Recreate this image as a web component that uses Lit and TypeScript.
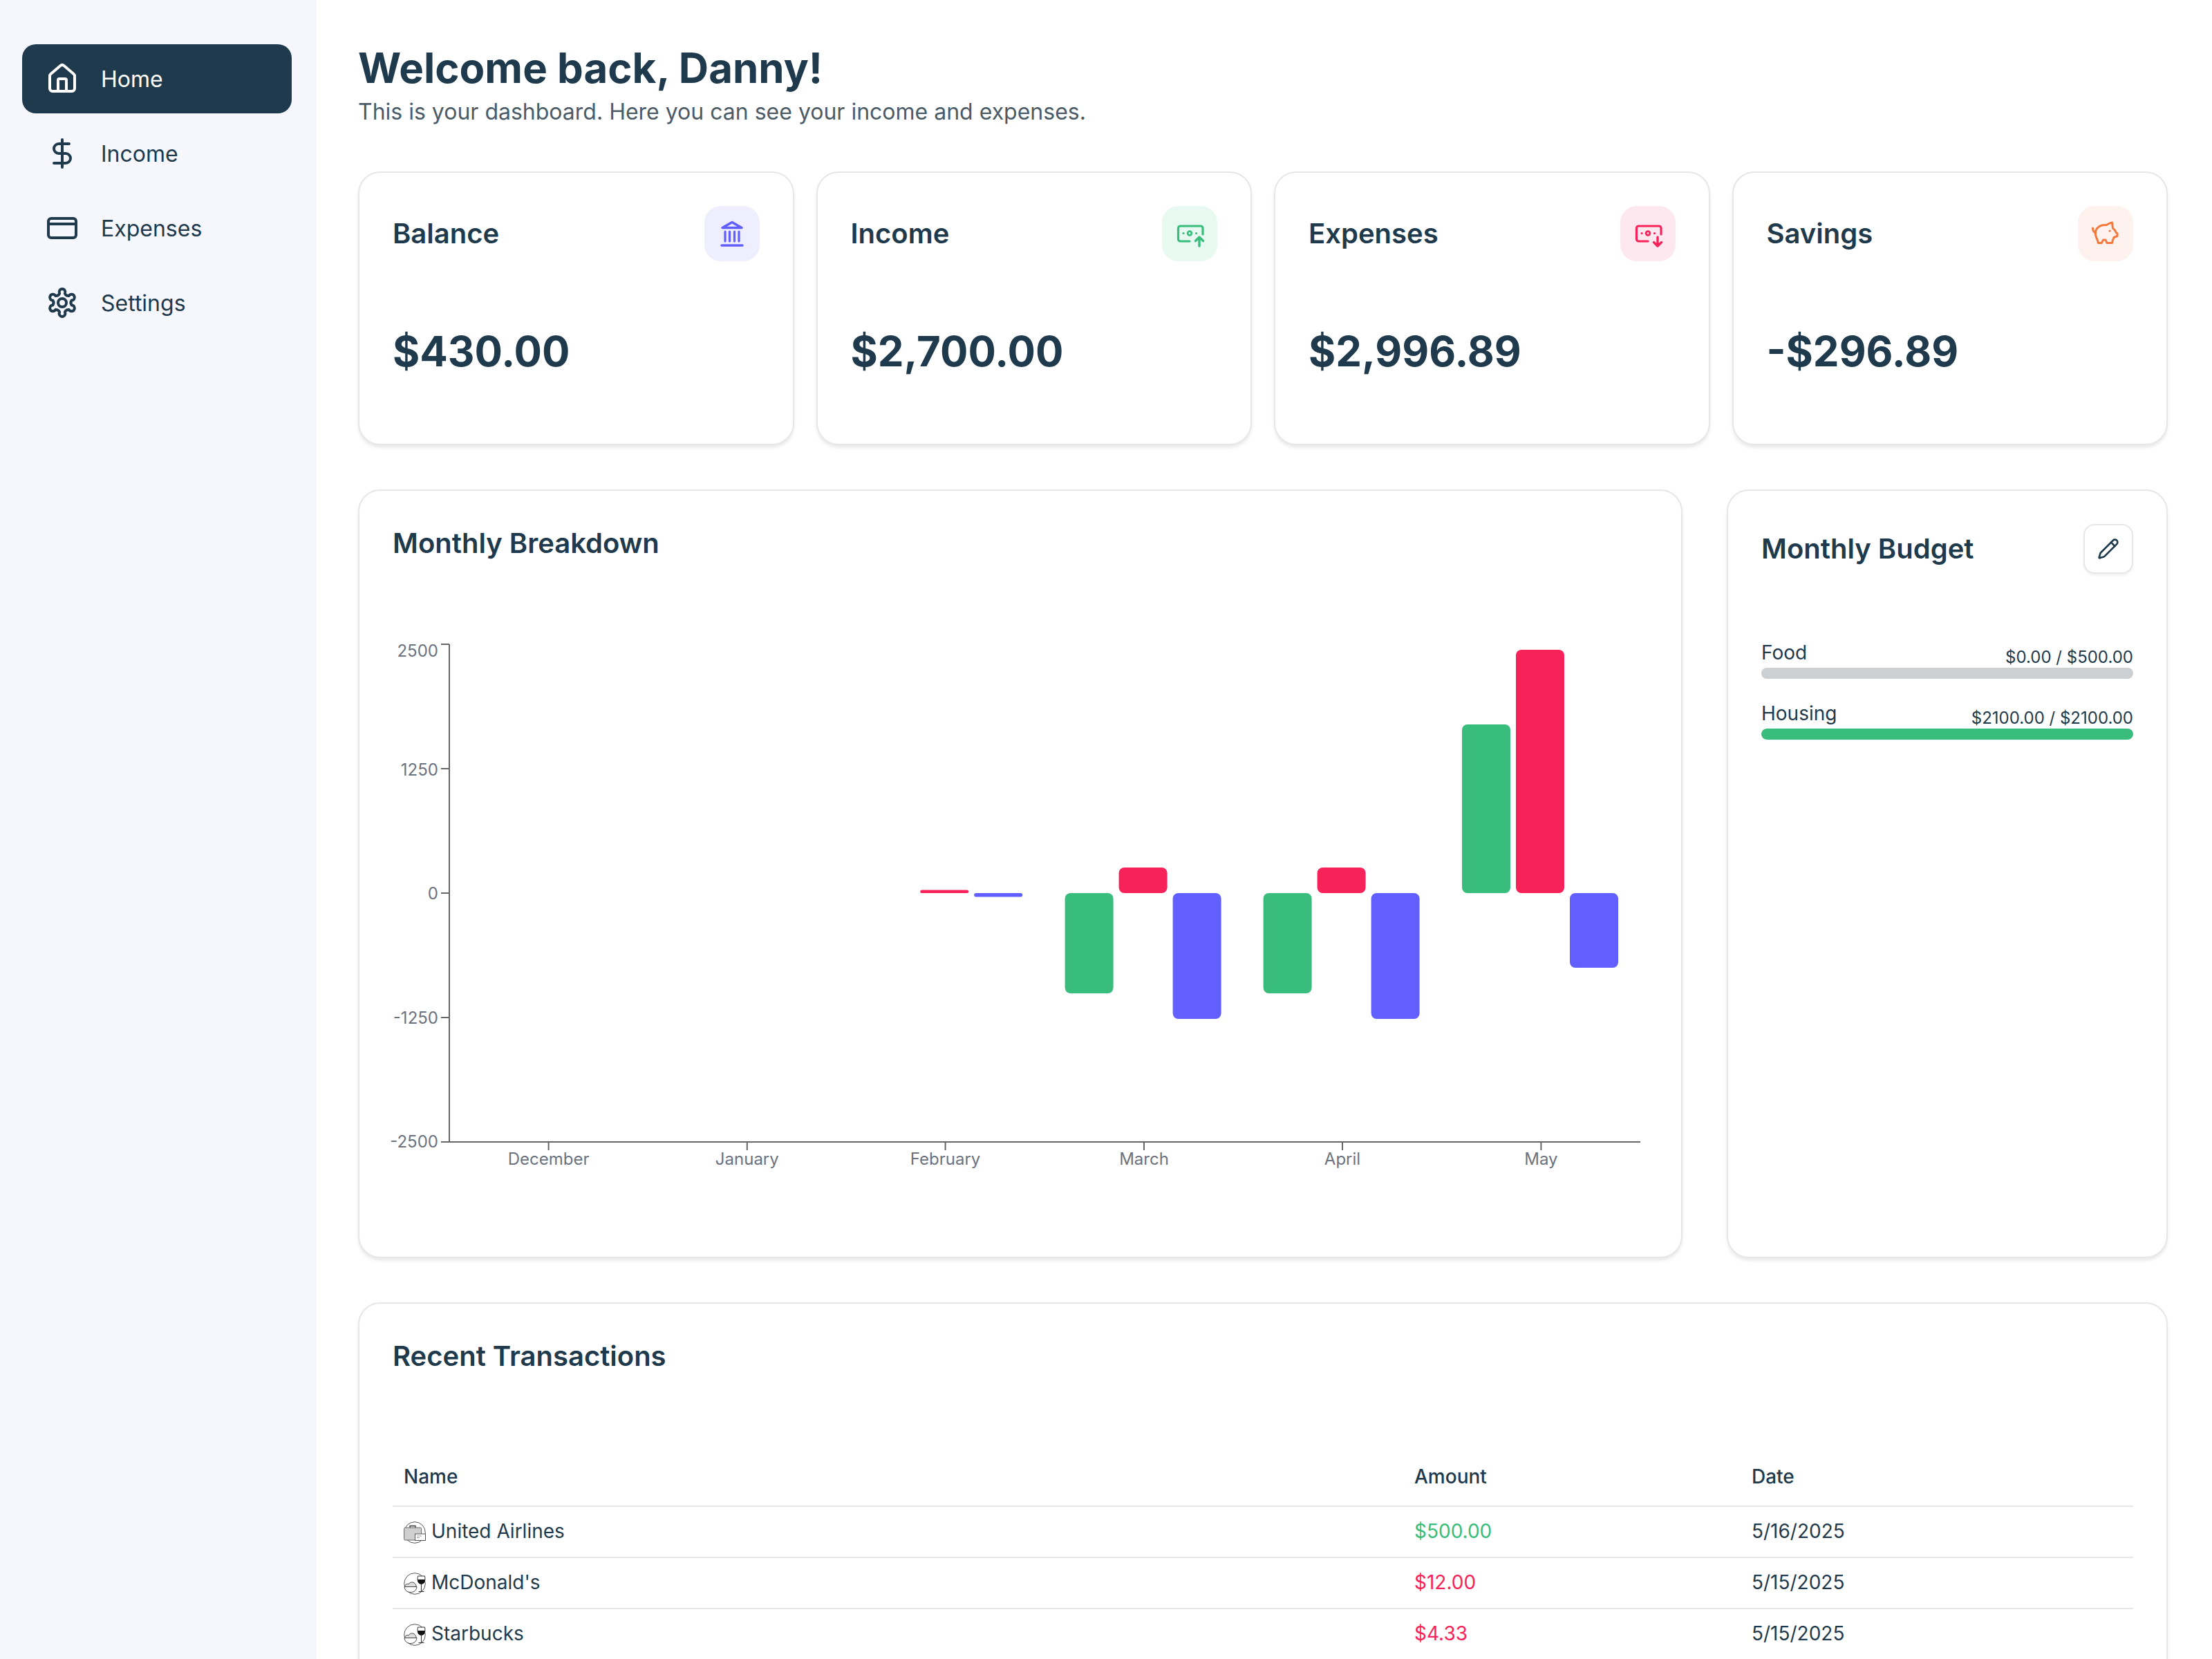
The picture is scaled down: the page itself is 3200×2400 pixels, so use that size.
import { LitElement, html, css, svg } from "lit";
import { customElement } from "lit/decorators.js";

const ic = (body: unknown, size = 48) => html`<svg width=${size} height=${size} viewBox="0 0 24 24" fill="none" stroke="currentColor" stroke-width="2" stroke-linecap="round" stroke-linejoin="round">${body}</svg>`;

function gearPath() {
  const p = (r: number, deg: number) => {
    const a = ((deg - 90) * Math.PI) / 180;
    return `${(12 + r * Math.cos(a)).toFixed(2)} ${(12 + r * Math.sin(a)).toFixed(2)}`;
  };
  let d = `M${p(7, -16)}`;
  for (let k = 0; k < 6; k++) {
    const t = k * 60;
    d += ` A2.2 2.2 0 1 1 ${p(7, t + 16)} A3 3 0 0 0 ${p(7, t + 44)}`;
  }
  return d + "Z";
}

const navIcons = {
  home: ic(svg`<path d="M15 21v-8a1 1 0 0 0-1-1h-4a1 1 0 0 0-1 1v8"/><path d="M3 10a2 2 0 0 1 .709-1.528l7-5.999a2 2 0 0 1 2.582 0l7 5.999A2 2 0 0 1 21 10v9a2 2 0 0 1-2 2H5a2 2 0 0 1-2-2z"/>`),
  dollar: ic(svg`<line x1="12" x2="12" y1="2" y2="22"/><path d="M17 5H9.5a3.5 3.5 0 0 0 0 7h5a3.5 3.5 0 0 1 0 7H6"/>`),
  card: ic(svg`<rect x="2" y="5" width="20" height="14" rx="2"/><line x1="2" x2="22" y1="9" y2="9"/>`),
  gear: ic(svg`<path d=${gearPath()}/><circle cx="12" cy="12" r="3"/>`),
};

const box = (body: unknown) => html`<svg width="80" height="80" viewBox="0 0 80 80" fill="none" stroke="currentColor" stroke-linecap="round" stroke-linejoin="round">${body}</svg>`;

const bank = box(svg`<path d="M40 23.500 L26 31.500 H54 Z" stroke-width="3.500"/><path d="M30 37V51M36.500 37V51M43.500 37V51M50 37V51" stroke-width="3.200"/><path d="M25 57H55" stroke-width="3.500"/>`);
const money = (arrow: unknown) => box(svg`<path d="M40 51H26.500a3 3 0 0 1-3-3V32a3 3 0 0 1 3-3H56a3 3 0 0 1 3 3v9" stroke-width="3.200"/><circle cx="40" cy="39.500" r="2.800" stroke-width="2.800"/><path d="M31 39.500h.1M49.500 39.500h.1" stroke-width="3.200"/>${arrow}`);
const moneyUp = money(svg`<path d="M54 58V45M48.500 50.500 54 45l5.500 5.500" stroke-width="3.400"/>`);
const moneyDown = money(svg`<path d="M54 45V58M48.500 52.500 54 58l5.500-5.500" stroke-width="3.400"/>`);
const pig = box(svg`<path d="M28 32C31 28.500 36 27 41.500 27.500C44 26 47 24 49.500 24L50.500 32C53 34 54.500 36 55.500 38.700L57 39.500V43.500L52 45.500C51 48 50 50 49.500 53.500H42L40 49H36.500L34.500 53.500H29.500C28.500 49 26.500 46 25.500 42C24.500 38 25.500 35 28 32Z" stroke-width="3"/><path d="M21.500 32C21.500 35 23 38 25.700 38.700" stroke-width="3"/><path d="M46 36h.1" stroke-width="3.200"/>`);

const pencil = html`<svg width="32" height="32" viewBox="0 0 24 24" fill="none" stroke="currentColor" stroke-width="2" stroke-linecap="round" stroke-linejoin="round"><path d="M21.174 6.812a1 1 0 0 0-3.986-3.987L3.842 16.174a2 2 0 0 0-.5.83l-1.321 4.352a.5.5 0 0 0 .623.622l4.353-1.32a2 2 0 0 0 .83-.497z"/><path d="m15 5 4 4"/></svg>`;

const travel = html`<svg class="cat" width="32" height="32" viewBox="0 0 32 32" fill="none"><circle cx="16" cy="16" r="15.300" stroke="#555" stroke-width="1"/><path d="M9 9V6.500h8V9" stroke="#333" stroke-width="1.300"/><rect x="0.600" y="9" width="25" height="18" rx="1.500" fill="#cfcfcf" stroke="#666" stroke-width="1"/><rect x="16.500" y="18" width="15" height="9.500" fill="#fff" stroke="#555" stroke-width="1"/><path d="M19 21h7M19 23.500h4" stroke="#999" stroke-width="1"/></svg>`;
const food = html`<svg class="cat" width="32" height="32" viewBox="0 0 32 32" fill="none"><circle cx="16" cy="16" r="15.300" stroke="#555" stroke-width="1"/><path d="M1 20.500h18c-.5 5-4 8-9 8s-8.500-3-9-8Z" fill="#fff" stroke="#444" stroke-width="1"/><path d="M1.500 20c.5-3 3-4 6-3.500 1.500-3 6-3.500 8.500-1 1.500 1.500 2 3 2 4.500" fill="#ddd" stroke="#444" stroke-width="1"/><path d="M20.500 5h10c1 5 .5 11-5 11.500-5.500-.5-6-6.500-5-11.500Z" fill="#fff" stroke="#333" stroke-width="1"/><path d="M20.300 10h10.400c.4 3-1 6.500-5.200 6.500-4.200 0-5.600-3.500-5.200-6.500Z" fill="#111"/><path d="M25.500 16.500V27M21.500 27.500h8" stroke="#333" stroke-width="1"/></svg>`;

interface Bar { x: number; w: number; top: number; bottom: number; c: string }
const GREEN = "#38bd7c", RED = "#f8225b", BLUE = "#615fff";
const centers = [793.6, 1080.8, 1367.6, 1655, 1942, 2229.4];
const off = [-114.4, -36.4, 41.6];
const bars: Bar[] = [
  { x: centers[2] + off[1], w: 70, top: 1287.5, bottom: 1292, c: RED },
  { x: centers[2] + off[2], w: 70, top: 1292, bottom: 1297.5, c: BLUE },
  { x: centers[3] + off[0], w: 70, top: 1292, bottom: 1437, c: GREEN },
  { x: centers[3] + off[1], w: 70, top: 1255, bottom: 1292, c: RED },
  { x: centers[3] + off[2], w: 70, top: 1292, bottom: 1474, c: BLUE },
  { x: centers[4] + off[0], w: 70, top: 1292, bottom: 1437, c: GREEN },
  { x: centers[4] + off[1], w: 70, top: 1255, bottom: 1292, c: RED },
  { x: centers[4] + off[2], w: 70, top: 1292, bottom: 1474, c: BLUE },
  { x: centers[5] + off[0], w: 70, top: 1048, bottom: 1292, c: GREEN },
  { x: centers[5] + off[1], w: 70, top: 940, bottom: 1292, c: RED },
  { x: centers[5] + off[2], w: 70, top: 1292, bottom: 1400, c: BLUE },
];
const months = ["December", "January", "February", "March", "April", "May"];
const yTicks: [string, number, number][] = [["2500", 932, 941], ["1250", 1112, 1113], ["0", 1292, 1292], ["-1250", 1472, 1472], ["-2500", 1652, 1651]];

const stats = [
  { t: "Balance", v: "$430.00", i: bank, k: "blue" },
  { t: "Income", v: "$2,700.00", i: moneyUp, k: "green" },
  { t: "Expenses", v: "$2,996.89", i: moneyDown, k: "red" },
  { t: "Savings", v: "-$296.89", i: pig, k: "orange" },
];
const tx = [
  { n: "United Airlines", a: "$500.00", d: "5/16/2025", i: travel, pos: true },
  { n: "McDonald's", a: "$12.00", d: "5/15/2025", i: food, pos: false },
  { n: "Starbucks", a: "$4.33", d: "5/15/2025", i: food, pos: false },
];

@customElement("app-root")
export class AppRoot extends LitElement {
  static styles = css`
    :host { display: flex; height: 2400px; width: 3200px; overflow: hidden; font-family: Inter, "Liberation Sans", sans-serif; color: #1e3a4c; background: #fff; }
    * { box-sizing: border-box; }
    .side { width: 458px; flex: none; background: #f5f7fc; padding: 64px 36px 0 32px; display: flex; flex-direction: column; gap: 8px; }
    .nav { height: 100px; display: flex; align-items: center; gap: 32px; padding-left: 34px; border-radius: 20px; font-size: 32px; color: #1e3a4c; }
    .nav svg { flex: none; }
    .nav.on { background: #1e3a4c; color: #fff; }
    .main { flex: 1; min-width: 0; padding: 60px 64px 0 60px; display: flex; flex-direction: column; }
    h1 { margin: 0; font-size: 60px; line-height: 76px; font-weight: 700; color: #1e3a4c; }
    .sub { margin: 6px 0 0; font-size: 32px; line-height: 40px; color: #4b5c68; }
    .stats { display: grid; grid-template-columns: repeat(4, 1fr); gap: 32px; margin-top: 66px; }
    .card { background: #fff; border: 2px solid #e6e7e9; border-radius: 32px; padding: 48px; box-shadow: 0 4px 4px rgba(0, 0, 0, 0.08); }
    .stat { height: 396px; }
    .row { display: flex; justify-content: space-between; align-items: center; }
    .ttl { font-size: 40px; line-height: 56px; font-weight: 600; margin: 0; color: #1e3a4c; }
    .ibox { width: 80px; height: 80px; border-radius: 24px; display: flex; }
    .blue { background: #efeeff; color: #615fff; }
    .green { background: #e8f9f1; color: #38bd7c; }
    .red { background: #fde8ef; color: #f8225b; }
    .orange { background: #fdf2ed; color: #f4793f; }
    .val { font-size: 60px; line-height: 76px; font-weight: 700; margin-top: 92px; color: #1e3a4c; }
    .mid { display: grid; grid-template-columns: 3fr 1fr; grid-template-rows: 1112px; gap: 64px; margin-top: 64px; }
    .chart { display: block; margin-top: 86px; overflow: visible; }
    .axis { font-size: 24px; fill: #6b7280; }
    .edit { width: 72px; height: 72px; border: 2px solid #e6e7e9; border-radius: 16px; display: flex; align-items: center; justify-content: center; box-shadow: 0 3px 3px rgba(0, 0, 0, 0.05); background: #fff; }
    .budgets { margin-top: 96px; display: flex; flex-direction: column; gap: 32px; }
    .bhead { display: flex; justify-content: space-between; align-items: flex-end; height: 40px; }
    .blabel { font-size: 28px; line-height: 36px; align-self: flex-start; }
    .bval { font-size: 24px; line-height: 30px; }
    .track { height: 16px; border-radius: 8px; background: #cdd0d2; overflow: hidden; }
    .fill { height: 100%; background: #38bd7c; border-radius: 8px; }
    .tx { margin-top: 64px; flex: none; }
    table { width: 100%; border-collapse: collapse; margin-top: 105px; table-layout: fixed; font-size: 28px; }
    .c1 { width: 1462px; }
    .c2 { width: 488px; }
    th { text-align: left; font-weight: 500; padding: 0 16px 22px; height: 84px; vertical-align: bottom; border-bottom: 2px solid #e6e7e9; line-height: 40px; }
    td { height: 74px; padding: 0 16px 3px; border-bottom: 2px solid #e6e7e9; line-height: 40px; }
    tr:last-child td { border-bottom: none; }
    .name { display: flex; align-items: center; gap: 8px; }
    .cat { flex: none; margin-top: 4px; }
    .pos { color: #38bd7c; }
    .neg { color: #f8225b; }
  `;

  render() {
    return html`
      <aside class="side">
        <div class="nav on">${navIcons.home}<span>Home</span></div>
        <div class="nav">${navIcons.dollar}<span>Income</span></div>
        <div class="nav">${navIcons.card}<span>Expenses</span></div>
        <div class="nav">${navIcons.gear}<span>Settings</span></div>
      </aside>
      <main class="main">
        <h1>Welcome back, Danny!</h1>
        <p class="sub">This is your dashboard. Here you can see your income and expenses.</p>
        <section class="stats">
          ${stats.map((s) => html`<div class="card stat">
            <div class="row"><h3 class="ttl">${s.t}</h3><div class="ibox ${s.k}">${s.i}</div></div>
            <div class="val">${s.v}</div>
          </div>`)}
        </section>
        <section class="mid">
          <div class="card">
            <h3 class="ttl">Monthly Breakdown</h3>
            ${this.chart()}
          </div>
          <div class="card">
            <div class="row"><h3 class="ttl">Monthly Budget</h3><div class="edit">${pencil}</div></div>
            <div class="budgets">
              <div><div class="bhead"><span class="blabel">Food</span><span class="bval">$0.00 / $500.00</span></div><div class="track"></div></div>
              <div><div class="bhead"><span class="blabel">Housing</span><span class="bval">$2100.00 / $2100.00</span></div><div class="track"><div class="fill" style="width:100%"></div></div></div>
            </div>
          </div>
        </section>
        <section class="card tx">
          <h3 class="ttl">Recent Transactions</h3>
          <table>
            <colgroup><col class="c1" /><col class="c2" /><col /></colgroup>
            <thead><tr><th>Name</th><th>Amount</th><th>Date</th></tr></thead>
            <tbody>
              ${tx.map((t) => html`<tr>
                <td><div class="name">${t.i}<span>${t.n}</span></div></td>
                <td class=${t.pos ? "pos" : "neg"}>${t.a}</td>
                <td>${t.d}</td>
              </tr>`)}
            </tbody>
          </table>
        </section>
      </main>
    `;
  }

  chart() {
    return html`<svg class="chart" width="1816" height="800" viewBox="568 900 1816 800">
      ${bars.map((b) => svg`<rect x=${b.x} y=${b.top} width=${b.w} height=${b.bottom - b.top} rx=${Math.min(8, (b.bottom - b.top) / 2)} fill=${b.c}></rect>`)}
      <path d="M650 932V1652H2373" fill="none" stroke="#666" stroke-width="2"></path>
      ${yTicks.map(([l, y, ty]) => svg`<line x1="638" x2="650" y1=${y} y2=${y} stroke="#666" stroke-width="2"></line><text class="axis" x="634" y=${ty} text-anchor="end" dominant-baseline="central">${l}</text>`)}
      ${months.map((m, i) => svg`<line x1=${centers[i]} x2=${centers[i]} y1="1652" y2="1664" stroke="#666" stroke-width="2"></line><text class="axis" x=${centers[i]} y="1676" text-anchor="middle" dominant-baseline="central">${m}</text>`)}
    </svg>`;
  }
}
